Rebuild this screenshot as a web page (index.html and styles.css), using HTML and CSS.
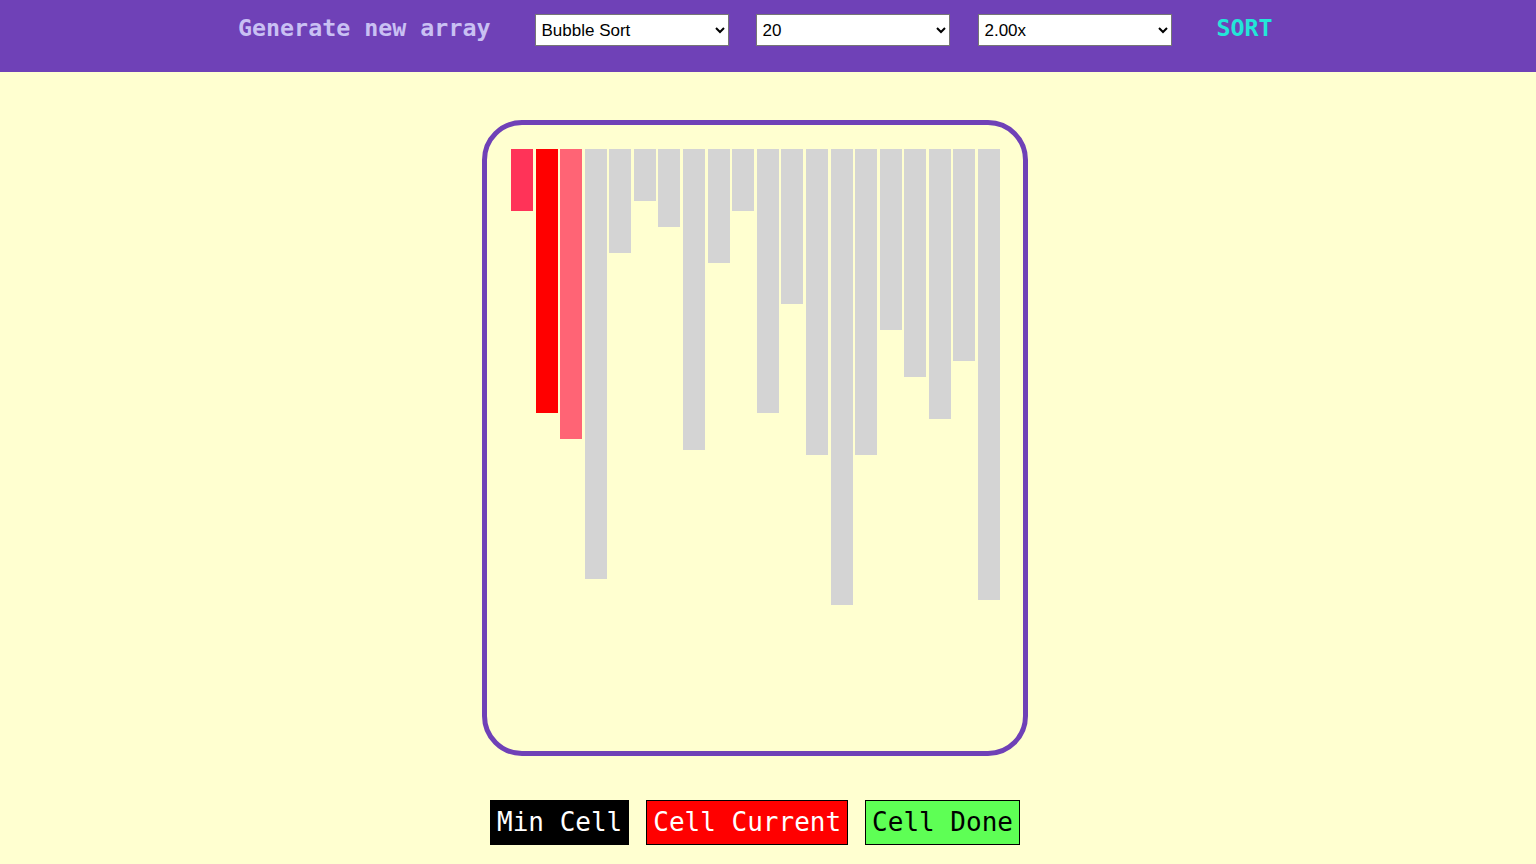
FILE: index.html
```html
<!DOCTYPE html>
<html lang="en">
<head>
<meta charset="utf-8">
<title>Sorting Visualizer</title>
<link rel="stylesheet" href="styles.css">
</head>
<body>
<header class="topbar">
  <button class="text-btn gen-btn">Generate new array</button>
  <select class="ctl ctl-algo">
    <option selected>Bubble Sort</option>
    <option>Selection Sort</option>
    <option>Insertion Sort</option>
    <option>Merge Sort</option>
    <option>Quick Sort</option>
  </select>
  <select class="ctl ctl-size">
    <option>10</option>
    <option selected>20</option>
    <option>30</option>
    <option>50</option>
  </select>
  <select class="ctl ctl-speed">
    <option>0.50x</option>
    <option>1.00x</option>
    <option selected>2.00x</option>
    <option>4.00x</option>
  </select>
  <button class="text-btn sort-btn">SORT</button>
</header>
<main class="main">
  <div class="board">
    <div class="bars">
      <div class="bar bar-min" style="height:62px"></div>
      <div class="bar bar-current" style="height:264px"></div>
      <div class="bar bar-compare" style="height:290px"></div>
      <div class="bar" style="height:430px"></div>
      <div class="bar" style="height:104px"></div>
      <div class="bar" style="height:52px"></div>
      <div class="bar" style="height:78px"></div>
      <div class="bar" style="height:301px"></div>
      <div class="bar" style="height:114px"></div>
      <div class="bar" style="height:62px"></div>
      <div class="bar" style="height:264px"></div>
      <div class="bar" style="height:155px"></div>
      <div class="bar" style="height:306px"></div>
      <div class="bar" style="height:456px"></div>
      <div class="bar" style="height:306px"></div>
      <div class="bar" style="height:181px"></div>
      <div class="bar" style="height:228px"></div>
      <div class="bar" style="height:270px"></div>
      <div class="bar" style="height:212px"></div>
      <div class="bar" style="height:451px"></div>
    </div>
  </div>
  <div class="legend">
    <span class="legend-item legend-min">Min Cell</span>
    <span class="legend-item legend-current">Cell Current</span>
    <span class="legend-item legend-done">Cell Done</span>
  </div>
</main>
</body>
</html>
```

FILE: styles.css
```css
html, body {
  margin: 0;
  padding: 0;
}

body {
  background: #ffffd0;
  font-family: "DejaVu Sans Mono", "Liberation Mono", monospace;
}

.topbar {
  height: 72px;
  box-sizing: border-box;
  background: #6f41b7;
  display: flex;
  align-items: flex-start;
  padding: 14px 0 0 238px;
}

.text-btn {
  background: none;
  border: none;
  padding: 0;
  margin: 0;
  font-family: "DejaVu Sans Mono", monospace;
  font-weight: bold;
  font-size: 23.3px;
  line-height: 28px;
  cursor: pointer;
}

.gen-btn {
  color: #c9c0f3;
  margin-right: 45px;
}

.sort-btn {
  color: #22e6d8;
  margin-left: 44px;
}

.ctl {
  width: 194px;
  height: 32px;
  box-sizing: border-box;
  font-family: "Liberation Sans", Arial, sans-serif;
  font-size: 17px;
  color: #000;
  background-color: #fff;
  border: 1px solid #767676;
  border-radius: 0;
  margin: 0;
  padding-left: 1px;
}

.ctl-size {
  margin-left: 27px;
}

.ctl-speed {
  margin-left: 28px;
}

.main {
  display: flex;
  flex-direction: column;
  align-items: center;
  padding-right: 26px;
}

.board {
  margin-top: 48px;
  width: 546px;
  height: 636px;
  box-sizing: border-box;
  border: 5px solid #6f41b7;
  border-radius: 40px;
  padding: 24px 0 0 24px;
}

.bars {
  width: 489px;
  display: flex;
  justify-content: space-between;
  align-items: flex-start;
}

.bar {
  width: 22px;
  background: #d4d4d4;
}

.bar-min {
  background: #ff3358;
}

.bar-current {
  background: #ff0000;
}

.bar-compare {
  background: #ff6475;
}

.legend {
  margin-top: 44px;
  display: flex;
  gap: 17px;
}

.legend-item {
  font-family: "DejaVu Sans Mono", monospace;
  font-size: 26px;
  line-height: 43px;
  padding: 0 6px;
  border: 1px solid #000;
  white-space: pre;
}

.legend-min {
  background: #000;
  color: #fff;
}

.legend-current {
  background: #ff0000;
  color: #fff;
}

.legend-done {
  background: #5eff55;
  color: #000;
}
```
